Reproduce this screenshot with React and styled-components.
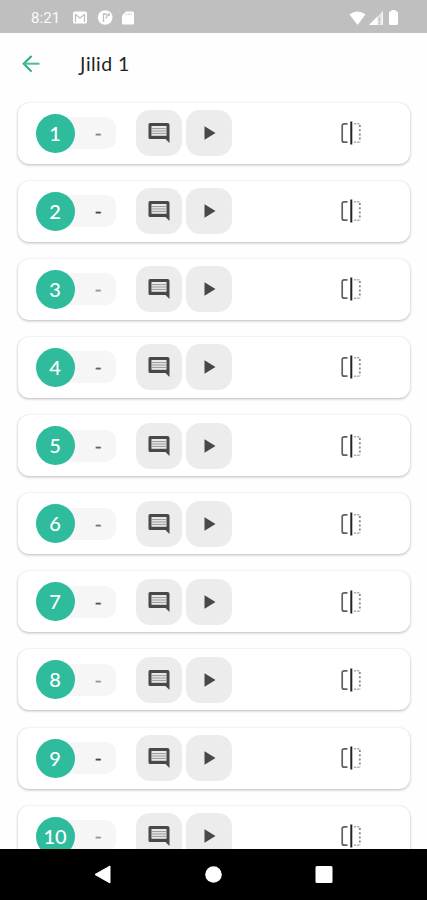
import React from 'react';
import styled, { createGlobalStyle } from "styled-components";

const GlobalStyle = createGlobalStyle`
  * { box-sizing: border-box; }
  body {
    margin: 0;
    background: #fff;
    overflow: hidden;
  }
`;

const Screen = styled.div`
  display: flex;
  flex-direction: column;
  height: 900px;
  width: 100%;
  background: #fefefe;
  font-family: Lato, "Noto Sans", sans-serif;
`;

const StatusBar = styled.div`
  display: flex;
  align-items: center;
  flex: none;
  height: 33px;
  padding: 2px 29px 0 31px;
  background: #bfbfbf;
  color: #fff;
`;

const Clock = styled.span`
  width: 42px;
  font-family: Roboto, sans-serif;
  font-size: 15px;
  line-height: 18px;
  letter-spacing: 0.1px;
  color: #fafafa;
`;

const StatusIcons = styled.div`
  display: flex;
  align-items: center;
  gap: ${(props) => props.$gap};
  margin-left: ${(props) => (props.$end ? "auto" : "0")};
  svg { display: block; }
`;

const Header = styled.header`
  display: flex;
  align-items: center;
  flex: none;
  height: 61px;
  padding-left: 22px;
`;

const BackButton = styled.button`
  display: flex;
  width: 58px;
  padding: 0;
  border: 0;
  background: none;
  cursor: pointer;
`;

const Title = styled.h1`
  margin: 0;
  font-size: 19.5px;
  font-weight: 400;
  line-height: 24px;
  letter-spacing: 0.45px;
  color: #222;

  /* capital with a tail below the baseline */
  &::first-letter {
    font-family: "Noto Sans", sans-serif;
    font-size: 20px;
  }
`;

const List = styled.main`
  display: flex;
  flex-direction: column;
  flex: 1;
  min-height: 0;
  gap: 17.15px;
  padding: 8.5px 17px 0 17.5px;
  overflow: hidden;
`;

const Card = styled.div`
  display: flex;
  align-items: center;
  flex: none;
  height: 61px;
  padding: 0 49px 0 18px;
  border-radius: 11px;
  background: #fff;
  box-shadow: 0 1px 3px rgba(0, 0, 0, 0.27), 0 0 1px rgba(0, 0, 0, 0.08);
`;

const Score = styled.div`
  display: flex;
  align-items: center;
  width: 80.5px;
  height: 32px;
  margin-right: 19.5px;
  border-radius: 19px 12px 12px 19px;
  background: #f6f6f6;
`;

const PageNumber = styled.span`
  display: flex;
  align-items: center;
  justify-content: center;
  flex: none;
  width: 39px;
  height: 39px;
  padding-bottom: 1px;
  border-radius: 50%;
  background: #2fbc9d;
  color: #fff;
  font-size: 20px;
  font-weight: 500;
`;

const Grade = styled.span`
  flex: 1;
  padding: 0 0 2px 6px;
  text-align: center;
  font-size: 20px;
  line-height: 20px;
  color: ${(props) => props.$color};
  -webkit-text-stroke: 0.2px ${(props) => props.$color};
`;

const ActionButton = styled.button`
  display: flex;
  align-items: center;
  justify-content: center;
  width: 46px;
  height: 46px;
  margin-right: 4px;
  padding: 0 0 0 ${(props) => props.$shift || "0"};
  border: 0;
  border-radius: 14px;
  background: #ececec;
  color: #484848;
  cursor: pointer;
`;

const FlipButton = styled.button`
  display: flex;
  margin-left: auto;
  padding: 0;
  border: 0;
  background: none;
  cursor: pointer;
`;

const NavBar = styled.nav`
  display: flex;
  align-items: center;
  justify-content: space-between;
  flex: none;
  height: 51px;
  padding: 0 94px;
  background: #000;
`;

const MailIcon = () => (
  <svg width="15" height="13" viewBox="0 0 15 13">
    <rect x="0" y="0.5" width="14" height="12" rx="1.5" fill="#fff" />
    <path d="M2.5 11V3.5L7 7L11.5 3.5V11" fill="none" stroke="#bfbfbf" strokeWidth="1.3" />
  </svg>
);

const AppIcon = () => (
  <svg width="15" height="15" viewBox="0 0 15 15">
    <circle cx="7.2" cy="7.5" r="7.3" fill="#fff" />
    <path d="M5.5 12V4H7.3C9.5 4 9.5 8 7.5 8M9.5 4.5H12M10.7 3.2V6" fill="none" stroke="#bfbfbf" strokeWidth="1.3" />
  </svg>
);

const CardIcon = () => (
  <svg width="12" height="14" viewBox="0 0 12 14">
    <path d="M4 0.5H10.5Q12 0.5 12 2V12Q12 13.5 10.5 13.5H1.5Q0 13.5 0 12V4.5Z" fill="#fff" />
    <path d="M4.5 2.2V4.2M6.8 2.2V4.2M9.1 2.2V4.2" stroke="#d4d4d4" />
  </svg>
);

const WifiIcon = () => (
  <svg width="17" height="14" viewBox="0 0 17 14">
    <path d="M0.5 3.4Q8.5 -2.6 16.5 3.4L8.5 14Z" fill="#fff" />
  </svg>
);

const SignalIcon = () => (
  <svg width="14" height="14" viewBox="0 0 14 14">
    <path d="M0 14L14 0V14Z" fill="#e2e2e2" />
    <path d="M0 14L8.5 5.5V14Z" fill="#fff" />
    <path d="M10.3 6.5V10M10.3 11.5V13.2" stroke="#bfbfbf" strokeWidth="1.3" />
    <path d="M13.2 0.8V14" stroke="#fff" />
  </svg>
);

const BatteryIcon = () => (
  <svg width="9" height="15" viewBox="0 0 9 15">
    <path d="M2.5 0H6.5V1.3H7.5Q9 1.3 9 2.8V13.5Q9 15 7.5 15H1.5Q0 15 0 13.5V2.8Q0 1.3 1.5 1.3H2.5Z" fill="#fff" />
  </svg>
);

const BackIcon = () => (
  <svg width="18" height="18" viewBox="0 0 18 18" fill="none" stroke="#20ad7f" strokeWidth="2">
    <path d="M9.5 1L1.7 8.7L9.5 16.6" />
    <path d="M2 8.7H17.5" stroke="#4fbd99" />
  </svg>
);

const CommentIcon = () => (
  <svg width="22" height="20" viewBox="0 0 22 20">
    <path d="M2 0H19.5Q21.5 0 21.5 2V20L17.5 16H2Q0.5 16 0.5 14.5V1.5Q0.5 0 2 0Z" fill="currentColor" />
    <path d="M3.5 3H18.5V12.8H3.5Z" fill="#e8e8e8" />
    <path d="M4 5.6H18M4 8H18M4 10.4H18" stroke="#999" strokeWidth="1" />
  </svg>
);

const PlayIcon = () => (
  <svg width="12" height="14" viewBox="0 0 12 14">
    <path d="M0.5 0.2L11.5 7L0.5 13.8Z" fill="currentColor" />
  </svg>
);

const FlipIcon = () => (
  <svg width="20" height="24" viewBox="0 0 20 24" fill="none">
    <path d="M6.5 2.8H3.2Q1.2 2.8 1.2 4.8V19.2Q1.2 21.2 3.2 21.2H6.5" stroke="#606060" strokeWidth="1.7" />
    <path d="M10.3 0.5V23.5" stroke="#222" strokeWidth="2" />
    <path d="M13 2.8H19.5M13 21.2H19.5" stroke="#aaa" strokeWidth="1.4" strokeDasharray="2.2 1" />
    <path d="M18.8 4V21" stroke="#8c8c8c" strokeWidth="1.9" strokeDasharray="2 2.2" />
  </svg>
);

const pages = [
  { number: 1, color: "#888" },
  { number: 2, color: "#444" },
  { number: 3, color: "#999" },
  { number: 4, color: "#666" },
  { number: 5, color: "#666" },
  { number: 6, color: "#777" },
  { number: 7, color: "#555" },
  { number: 8, color: "#999" },
  { number: 9, color: "#444" },
  { number: 10, color: "#999" },
];

const PageRow = ({ number, color }) => {
  return (
    <Card>
      <Score>
        <PageNumber>{number}</PageNumber>
        <Grade $color={color}>-</Grade>
      </Score>
      <ActionButton aria-label="Comment"><CommentIcon /></ActionButton>
      <ActionButton aria-label="Play" $shift="2px"><PlayIcon /></ActionButton>
      <FlipButton aria-label="Flip"><FlipIcon /></FlipButton>
    </Card>
  );
};

const App = () => {
  return (
    <Screen>
      <GlobalStyle />
      <StatusBar>
        <Clock>8:21</Clock>
        <StatusIcons $gap="9.5px">
          <MailIcon />
          <AppIcon />
          <CardIcon />
        </StatusIcons>
        <StatusIcons $gap="3px" $end>
          <WifiIcon />
          <SignalIcon />
          <span />
          <BatteryIcon />
        </StatusIcons>
      </StatusBar>
      <Header>
        <BackButton aria-label="Back"><BackIcon /></BackButton>
        <Title>Jilid 1</Title>
      </Header>
      <List>
        {pages.map((page) => (
          <PageRow key={page.number} number={page.number} color={page.color} />
        ))}
      </List>
      <NavBar>
        <svg width="18" height="20" viewBox="0 0 18 20">
          <path d="M1 9.5L16 1V18Z" fill="#fff" stroke="#fff" strokeLinejoin="round" />
        </svg>
        <svg width="17" height="17" viewBox="0 0 17 17">
          <circle cx="8.5" cy="8.5" r="8.3" fill="#fff" />
        </svg>
        <svg width="18" height="18" viewBox="0 0 18 18">
          <rect x="0.5" y="0" width="17" height="17" rx="1.5" fill="#fff" />
        </svg>
      </NavBar>
    </Screen>
  );
};
export default App;
